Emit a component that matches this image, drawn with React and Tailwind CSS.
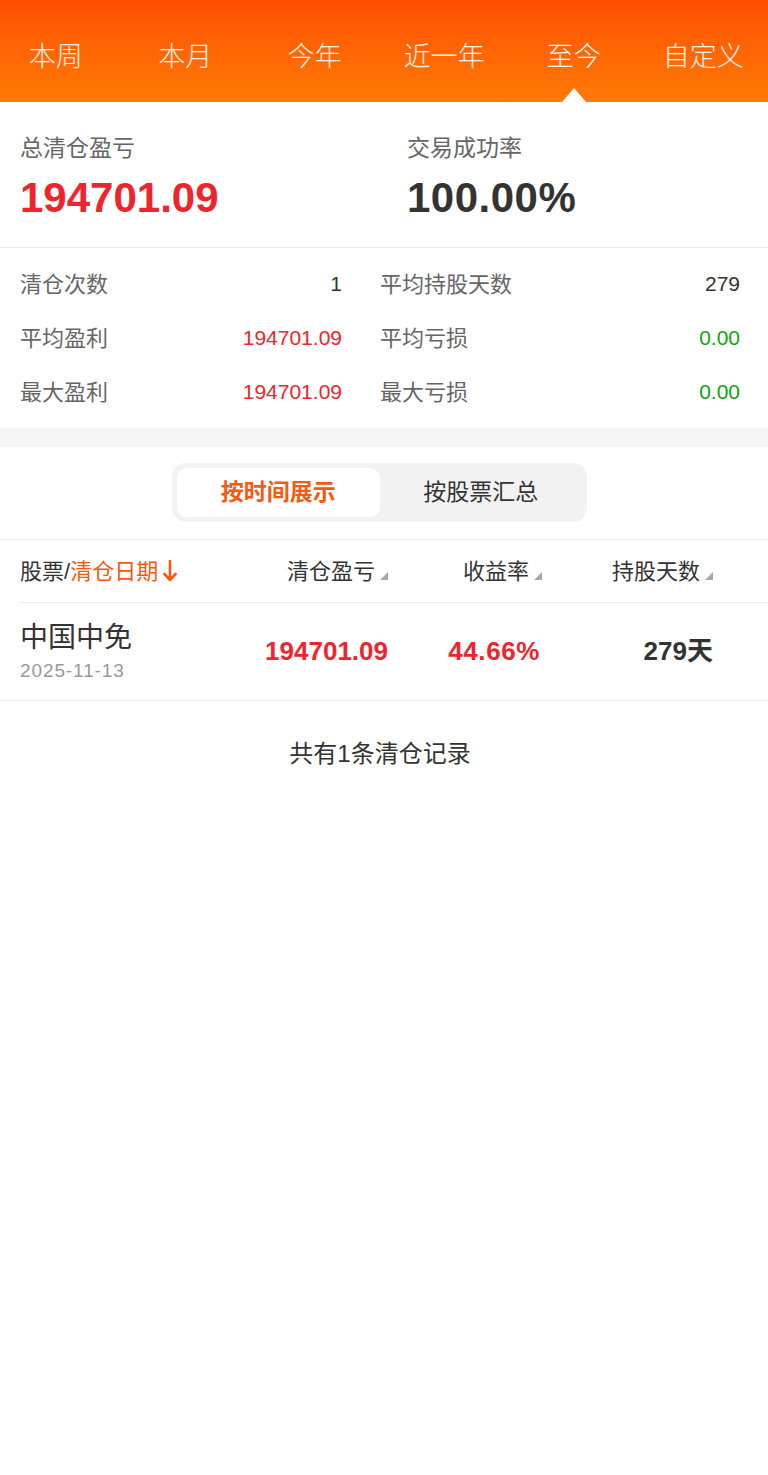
import { useState } from 'react';

const tabs = ['本周', '本月', '今年', '近一年', '至今', '自定义'];

const stats = [
  { l: '清仓次数', v: '1', c: 'text-[#333]', rl: '平均持股天数', rv: '279', rc: 'text-[#333]' },
  { l: '平均盈利', v: '194701.09', c: 'text-[#f0242c]', rl: '平均亏损', rv: '0.00', rc: 'text-[#12a112]' },
  { l: '最大盈利', v: '194701.09', c: 'text-[#f0242c]', rl: '最大亏损', rv: '0.00', rc: 'text-[#12a112]' },
];

const font = "font-['Liberation_Sans','Noto_Sans_CJK_SC',sans-serif]";

function SortMark() {
  return (
    <svg width="8" height="8" viewBox="0 0 8 8" className="ml-[5px] mt-[10px] shrink-0">
      <polygon points="8,0 8,8 0,8" fill="#a8a8a8" />
    </svg>
  );
}

export default function App() {
  const [tab, setTab] = useState(4);
  const [mode, setMode] = useState(0);

  return (
    <div className={`${font} bg-white min-h-[1475px] w-[768px] overflow-hidden`}>
      {/* header tabs */}
      <div className="h-[102px] bg-linear-to-b from-[#ff4e00] to-[#ff7a08]">
        <div className="h-full w-[777px] -ml-[9px] flex">
          {tabs.map((t, i) => (
            <button
              key={t}
              onClick={() => setTab(i)}
              className={`relative flex-1 flex items-center justify-center pt-[12px] text-[27px] font-light ${i === tab ? 'text-white' : 'text-white/90'}`}
            >
              {t}
              {i === tab && (
                <span className="absolute bottom-0 left-1/2 -translate-x-1/2 w-0 h-0 border-x-[12px] border-b-[14px] border-x-transparent border-b-white" />
              )}
            </button>
          ))}
        </div>
      </div>

      {/* summary */}
      <div className="grid grid-cols-[387px_1fr] px-5 pt-[31px] pb-[25px] border-b border-[#ececec]">
        <div>
          <div className="text-[23px] leading-[30px] text-[#666]">总清仓盈亏</div>
          <div className="mt-[11px] text-[42px] leading-[48px] font-semibold text-[#f0242c]">194701.09</div>
        </div>
        <div>
          <div className="text-[23px] leading-[30px] text-[#666]">交易成功率</div>
          <div className="mt-[11px] text-[42px] leading-[48px] font-semibold text-[#333] tracking-[0.5px]">100.00%</div>
        </div>
      </div>

      {/* stats */}
      <div className="grid grid-cols-[322px_360px] gap-x-[38px] px-5 py-[9px]">
        {stats.map((s) => (
          <div key={s.l} className="contents">
            <div className="h-[54px] flex items-center justify-between">
              <span className="text-[22px] text-[#666]">{s.l}</span>
              <span className={`text-[21px] ${s.c}`}>{s.v}</span>
            </div>
            <div className="h-[54px] flex items-center justify-between">
              <span className="text-[22px] text-[#666]">{s.rl}</span>
              <span className={`text-[21px] ${s.rc}`}>{s.rv}</span>
            </div>
          </div>
        ))}
      </div>

      <div className="h-[19px] bg-[#f5f5f5]" />

      {/* segmented */}
      <div className="mt-[16px] ml-[172px] w-[415px] h-[59px] bg-[#f2f2f2] rounded-[14px] p-[5px] flex">
        {['按时间展示', '按股票汇总'].map((m, i) => (
          <button
            key={m}
            onClick={() => setMode(i)}
            className={`flex-1 rounded-[10px] flex items-center justify-center text-[23px] ${i === mode ? 'bg-white text-[#f55a10] font-bold' : 'text-[#333]'}`}
          >
            {m}
          </button>
        ))}
      </div>

      {/* table head */}
      <div className="mt-[17px] border-t border-[#ececec]">
        <div className="h-[62px] grid grid-cols-[220px_148px_154px_171px] px-5 items-center text-[22px] text-[#333]">
          <div className="flex items-center">
            <span>股票/</span>
            <span className="text-[#f55a10]">清仓日期</span>
            <svg width="14" height="22" viewBox="0 0 14 22" className="ml-[5px]">
              <path d="M7 1 V20 M1.5 14 L7 20 L12.5 14" fill="none" stroke="#f55a10" strokeWidth="2.6" strokeLinecap="round" strokeLinejoin="round" />
            </svg>
          </div>
          <div className="flex items-center justify-end">
            <span>清仓盈亏</span>
            <SortMark />
          </div>
          <div className="flex items-center justify-end">
            <span>收益率</span>
            <SortMark />
          </div>
          <div className="flex items-center justify-end">
            <span>持股天数</span>
            <SortMark />
          </div>
        </div>
        <div className="ml-5 border-t border-[#ececec]" />

        {/* row */}
        <div className="h-[98px] grid grid-cols-[220px_148px_154px_171px] px-5 items-center border-b border-[#ececec]">
          <div>
            <div className="text-[28px] leading-[34px] text-[#333]">中国中免</div>
            <div className="mt-[4px] text-[19px] leading-[24px] text-[#999] tracking-[0.9px]">2025-11-13</div>
          </div>
          <div className="text-right text-[26px] font-semibold text-[#f0242c]">194701.09</div>
          <div className="text-right text-[26px] font-semibold text-[#f0242c] pr-[2px] tracking-[0.6px]">44.66%</div>
          <div className="text-right text-[26px] font-semibold text-[#333]">279天</div>
        </div>
      </div>

      <div className="pt-[38px] text-center text-[24px] leading-[30px] text-[#333] pr-[8px]">共有1条清仓记录</div>
    </div>
  );
}
